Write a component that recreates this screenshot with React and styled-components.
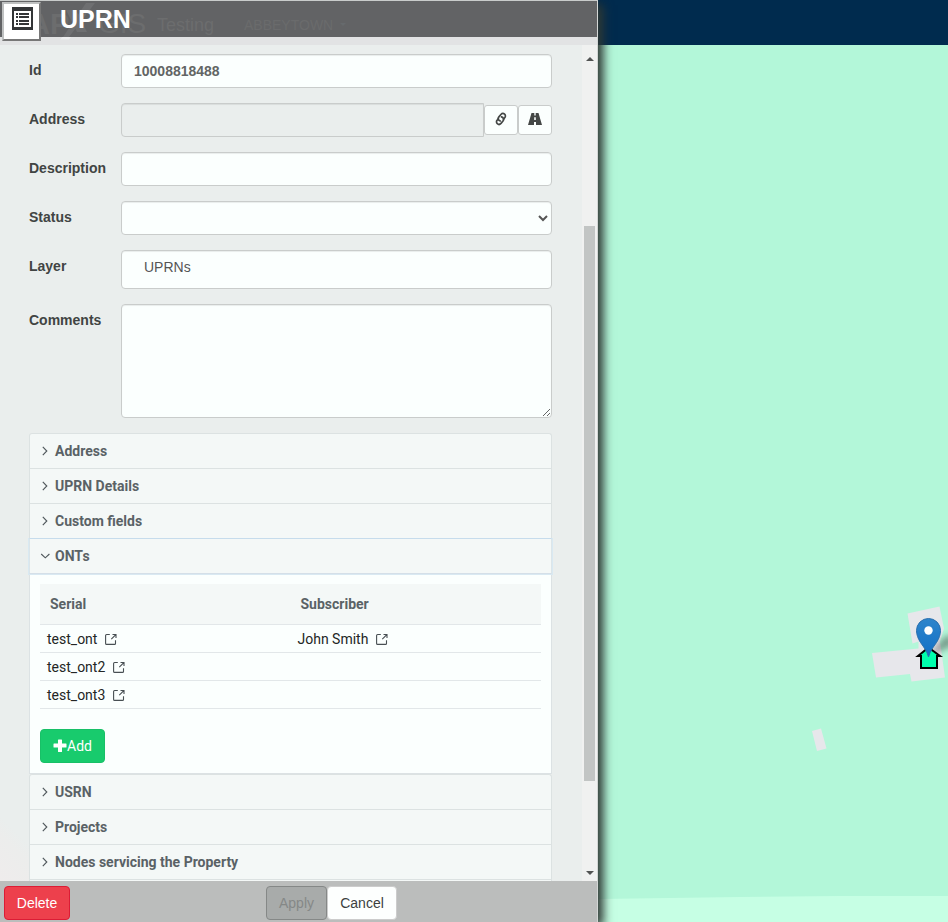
import React from "react";
import styled, { createGlobalStyle, css } from "styled-components";

const Global = createGlobalStyle`
  *, *::before, *::after { box-sizing: border-box; }
  body { margin: 0; overflow: hidden; font-family: "Liberation Sans", Arial, sans-serif; font-size: 14px; line-height: 20px; color: #333; }
  input, select, textarea, button { font: inherit; margin: 0; }
`;

const Page = styled.div`
  display: grid;
  grid-template-columns: 598px 1fr;
  height: 922px;
`;

const Panel = styled.section`
  position: relative;
  z-index: 1;
  display: flex;
  flex-direction: column;
  min-height: 0;
  background: #eaeeed;
  border-top: 1px solid #c9cccb;
  border-right: 1px solid #d3d6d5;
  box-shadow: 5px 5px 10px 0 #303a36, 1px 0 9px rgba(30, 35, 32, 0.4);
`;

const TitleBar = styled.header`
  position: relative;
  display: flex;
  align-items: flex-start;
  flex: none;
  height: 36px;
  padding-left: 2px;
  gap: 19px;
  background: #626365;
`;

const MenuButton = styled.button`
  z-index: 1;
  display: flex;
  align-items: flex-start;
  justify-content: center;
  flex: 0 0 39px;
  height: 39px;
  margin-top: 1px;
  padding: 3px 0 0 2px;
  background: #fff;
  border: 2px solid;
  border-color: #bfc1c1 #777 #777 #bfc1c1;
`;

const Title = styled.h1`
  z-index: 1;
  margin: 3px 0 0;
  font-size: 25px;
  line-height: 30px;
  font-weight: 700;
  color: #fff;
`;

const Ghost = styled.span`
  position: absolute;
  left: ${(p) => p.$x}px;
  top: ${(p) => p.$y}px;
  font-size: ${(p) => p.$size}px;
  line-height: ${(p) => p.$size}px;
  font-weight: ${(p) => p.$weight || 400};
  color: ${(p) => p.$tone || "#6c6d6e"};
`;

const GhostSlash = styled.svg`
  position: absolute;
  left: 58px;
  top: 1px;
`;

const GhostCaret = styled.svg`
  position: absolute;
  left: 340px;
  top: 22px;
`;

const Strip = styled.div`
  flex: 0 0 8px;
  background: #e2e3e4;
`;

const Scroller = styled.div`
  display: flex;
  flex: 1;
  min-height: 0;
`;

const Content = styled.div`
  flex: 1;
  min-width: 0;
  overflow: hidden;
  padding: 9px 30px 0 29px;
  background: linear-gradient(45deg, #efecec 0, #ecedec 34px, #eaeeed 46px);
`;

const Field = styled.div`
  display: grid;
  grid-template-columns: 92px 431px;
  margin-bottom: 15px;
  height: ${(p) => p.$h || 34}px;
`;

const Label = styled.label`
  padding-top: 6px;
  font-weight: 700;
  color: #414443;
`;

const control = css`
  width: 100%;
  height: 100%;
  color: #555;
  background: #fbfffe;
  border: 1px solid #c9cccb;
  border-radius: 4px;
  box-shadow: inset 0 1px 1px rgba(0, 0, 0, 0.075);
  outline: none;
`;

const Input = styled.input`
  ${control}
  padding: 6px 12px;
  font-weight: 700;
  color: #626564;
`;

const Select = styled.select`
  ${control}
  padding: 6px 12px;
`;

const TextArea = styled.textarea`
  ${control}
  display: block;
  padding: 6px 12px;
`;

const StaticValue = styled.div`
  ${control}
  padding: 6px 22px;
`;

const InputGroup = styled.div`
  display: grid;
  grid-template-columns: 363px 34px 34px;
  align-items: center;
`;

const LockedInput = styled(Input)`
  background: #eaeeed;
  border-radius: 4px 0 0 4px;
`;

const IconButton = styled.button`
  display: flex;
  align-items: center;
  justify-content: center;
  height: 30px;
  padding: 0 0 2px;
  color: #444746;
  background: #fbfffe;
  border: 1px solid #c9cccb;
  border-radius: 3px;
`;

const Accordion = styled.div`
  font-family: Roboto, sans-serif;
`;

const SectionHead = styled.div`
  display: flex;
  align-items: center;
  gap: 4px;
  height: ${(p) => (p.$open ? 36 : 35)}px;
  padding: 0 10px;
  font-weight: 700;
  color: #5a6266;
  background: #f4f8f7;
  border: 1px solid #dce2e2;
  border-bottom-width: ${(p) => (p.$open ? 1 : 0)}px;
  border-radius: ${(p) => (p.$round ? "3px 3px 0 0" : "0")};
  ${(p) =>
    p.$open &&
    css`
      border-color: #c6dcec #dce5e9 #d4dfe8;
      box-shadow: 0 0 0 1px #d9e9f2;
      clip-path: inset(0 -1px -1px -1px);
    `}
`;

const SectionBody = styled.div`
  height: 200px;
  padding: 10px 10px 0;
  background: #fbfffe;
  border: 1px solid #dce2e4;
  border-top: 0;
`;

const Table = styled.div`
  display: grid;
  grid-template-columns: 1fr 1fr;
  grid-template-rows: 41px repeat(3, 28px);
`;

const Th = styled.div`
  padding: 10px;
  font-weight: 700;
  color: #5a6266;
  background: #f4f8f7;
  border-bottom: 1px solid #e2e7e9;
`;

const Td = styled.div`
  display: flex;
  align-items: center;
  gap: 8px;
  padding: 0 7px;
  color: #232625;
  border-bottom: 1px solid #e2e7e9;
`;

const AddButton = styled.button`
  display: flex;
  align-items: center;
  width: 65px;
  height: 34px;
  margin-top: 20px;
  padding: 0 0 0 12px;
  color: #fff;
  background: #18cb6d;
  border: 1px solid #18c067;
  border-radius: 4px;
`;

const ScrollTrack = styled.div`
  display: flex;
  flex-direction: column;
  align-items: center;
  flex: 0 0 15px;
  padding: 12px 0 6px;
  background: #f0f1f0;
`;

const ScrollThumb = styled.div`
  width: 11px;
  height: 555px;
  margin: 165px 0 auto;
  background: #c2c5c4;
`;

const Arrow = styled.i`
  width: 0;
  height: 0;
  border: 4px solid transparent;
  ${(p) => (p.$up ? "border-top: 0; border-bottom-color: #515352;" : "border-bottom: 0; border-top-color: #515352;")}
`;

const Footer = styled.footer`
  display: grid;
  grid-template-columns: 262px 61px 70px;
  align-items: start;
  flex: 0 0 41px;
  padding: 5px 4px 0;
  background: #bbbdbc;
`;

const FooterButton = styled.button`
  height: 34px;
  padding: 0;
  border: 1px solid;
  border-radius: 4px;
  ${(p) =>
    ({
      danger: "width: 66px; color: #fff; background: #ed404c; border-color: #dc1c35;",
      muted: "color: #858887; background: #a8abaa; border-color: #858887;",
      plain: "color: #3c3f3e; background: #fdfffe; border-color: #ccc;",
    })[p.$kind]}
`;

const MapPane = styled.main`
  display: grid;
  grid-template-rows: 45px 1fr;
  background: #b3f7d9;
`;

const NavBar = styled.div`
  background: #002b4e;
`;

const MapDrawing = styled.svg`
  display: block;
`;

const Glyph = styled.svg`
  display: block;
  flex: none;
`;

function ListIcon() {
  return (
    <Glyph width="21" height="23" viewBox="0 0 21 23" shapeRendering="crispEdges">
      <path fill="#333537" d="M0 0h21v23H0z" />
      <path fill="#fff" d="M2 4h17v16H2z" />
      <path fill="#333537" d="M4 6h2v2H4zm3 0h10v2H7zM4 9h2v2H4zm3 0h10v2H7zM4 13h2v2H4zm3 0h10v2H7zM4 16h2v2H4zm3 0h10v2H7z" />
    </Glyph>
  );
}

function LinkIcon() {
  return (
    <Glyph width="14" height="14" viewBox="0 0 14 14" fill="none" stroke="currentColor" strokeWidth="1.7" strokeLinecap="round">
      <path d="M6.300 9C4.200 8.400 3.600 6.400 4.900 4.900l2-2.400c1-1.100 2.700-1.200 3.700-.3s1.100 2.500.1 3.600L9.500 7.300" />
      <path d="M7.500 4.900c2.100.6 2.700 2.600 1.500 4.100l-2 2.400c-1 1.100-2.700 1.200-3.700.3s-1.100-2.500-.1-3.600L4.300 6.700" />
    </Glyph>
  );
}

function RoadIcon() {
  return (
    <Glyph width="14" height="12" viewBox="0 0 14 12">
      <path fill="currentColor" d="M3.500 0h2.800v2.500h1.400V0h2.800L14 12H8V9H6v3H0zM6.200 4.300V7h1.600V4.300z" />
    </Glyph>
  );
}

function Chevron({ open }) {
  return (
    <Glyph width="11" height="12" viewBox="0 0 11 12" fill="none" stroke="#50585c" strokeWidth="1.15">
      <path d={open ? "M1.2 4l4.1 3.8L9.400 4" : "M2.800 1.800 6.800 6l-4 4.200"} />
    </Glyph>
  );
}

function ExternalIcon() {
  return (
    <Glyph width="12" height="12" viewBox="0 0 12 12" fill="none" stroke="#484f53" strokeWidth="1.1">
      <path d="M4.800 1.500H1.600q-1 0-1 1v7.900q0 1 1 1h7.900q1 0 1-1V7.200M7.500 1.500h3.500v3.500M10.800 1.700 6.300 6.200" />
    </Glyph>
  );
}

function PlusIcon() {
  return (
    <Glyph width="14" height="14" viewBox="0 0 14 14">
      <path fill="#fff" d="M5.500.5h3q.5 0 .5.5v3.500h4q.5 0 .5.5v3q0 .5-.5.5H9v4q0 .5-.5.5h-3q-.5 0-.5-.5v-4H1q-.5 0-.5-.5V5q0-.5.5-.5h4V1q0-.5.5-.5z" />
    </Glyph>
  );
}

function Section({ title, open, round }) {
  return (
    <SectionHead $open={open} $round={round}>
      <Chevron open={open} />
      {title}
    </SectionHead>
  );
}

function MapView() {
  return (
    <MapDrawing width="350" height="877" viewBox="598 45 350 877">
      <defs>
        <linearGradient id="pin" x1="0" y1="0" x2="0" y2="1">
          <stop offset="0" stopColor="#2e85cb" />
          <stop offset="1" stopColor="#126fc6" />
        </linearGradient>
        <filter id="soft" x="-50%" y="-50%" width="200%" height="200%">
          <feGaussianBlur stdDeviation="3" />
        </filter>
      </defs>
      <path fill="#b3f7d9" d="M598 45h350v877H598z" />
      <path fill="#c6ffe4" d="M598 899l142-2 100-1h108v26H598z" />
      <path fill="#e7e7eb" d="M907.500 613.500l32-7 4.500 22-4 13 5 36-33.500 4-1.500-7.500-34 3.500-4-24.500 46.500-4.500v-7l-6 2zM812 731l9-2.500 5.500 20-9.500 2.500z" />
      <path d="M929 656l15-19 10-2-2 11z" fill="#333" opacity=".45" filter="url(#soft)" />
      <path fill="#00ffad" stroke="#000" strokeWidth="2" d="M928.500 647.500 918 656h3v12h16v-12h3z" />
      <path fill="url(#pin)" stroke="#2a6fae" strokeWidth="1" d="M928.500 657c-1.500-6-4.500-9.500-8-14.500-2.500-3.800-4-8-4-12a12 12 0 0 1 24 0c0 4-1.500 8.200-4 12-3.500 5-6.500 8.500-8 14.500z" />
      <circle cx="928.500" cy="630.500" r="4.200" fill="#fff" />
    </MapDrawing>
  );
}

const onts = [
  { serial: "test_ont", subscriber: "John Smith" },
  { serial: "test_ont2" },
  { serial: "test_ont3" },
];

export default function App() {
  return (
    <Page>
      <Global />
      <Panel>
        <TitleBar>
          <Ghost $x={29} $y={9} $size={29} $weight={700}>AP</Ghost>
          <GhostSlash width="40" height="38" viewBox="0 0 40 38">
            <path fill="#6e6f71" d="M28 1h9L11 35H5zM8 8h10l11 22H19z" />
            <path fill="#eeeff0" d="M4.500 35H13l-2 2.500H2z" />
          </GhostSlash>
          <Ghost $x={98} $y={9} $size={28}>GIS</Ghost>
          <Ghost $x={157} $y={15} $size={18}>Testing</Ghost>
          <Ghost $x={244} $y={17} $size={14} $tone="#6a6b6c">ABBEYTOWN</Ghost>
          <GhostCaret width="6" height="4" viewBox="0 0 6 4">
            <path fill="#666a6d" d="M0 0h6L3 3z" />
          </GhostCaret>
          <MenuButton><ListIcon /></MenuButton>
          <Title>UPRN</Title>
        </TitleBar>
        <Strip />
        <Scroller>
          <Content>
            <Field><Label>Id</Label><Input defaultValue="10008818488" /></Field>
            <Field>
              <Label>Address</Label>
              <InputGroup>
                <LockedInput readOnly />
                <IconButton><LinkIcon /></IconButton>
                <IconButton><RoadIcon /></IconButton>
              </InputGroup>
            </Field>
            <Field><Label>Description</Label><Input /></Field>
            <Field><Label>Status</Label><Select /></Field>
            <Field $h={39}><Label>Layer</Label><StaticValue>UPRNs</StaticValue></Field>
            <Field $h={114}><Label>Comments</Label><TextArea /></Field>
            <Accordion>
              <Section title="Address" round />
              <Section title="UPRN Details" />
              <Section title="Custom fields" />
              <Section title="ONTs" open />
              <SectionBody>
                <Table>
                  <Th>Serial</Th>
                  <Th>Subscriber</Th>
                  {onts.map((o) => (
                    <React.Fragment key={o.serial}>
                      <Td>{o.serial}<ExternalIcon /></Td>
                      <Td>{o.subscriber && <>{o.subscriber}<ExternalIcon /></>}</Td>
                    </React.Fragment>
                  ))}
                </Table>
                <AddButton><PlusIcon />Add</AddButton>
              </SectionBody>
              <Section title="USRN" round />
              <Section title="Projects" />
              <Section title="Nodes servicing the Property" />
              <Section title="" />
            </Accordion>
          </Content>
          <ScrollTrack>
            <Arrow $up />
            <ScrollThumb />
            <Arrow />
          </ScrollTrack>
        </Scroller>
        <Footer>
          <FooterButton $kind="danger">Delete</FooterButton>
          <FooterButton $kind="muted">Apply</FooterButton>
          <FooterButton $kind="plain">Cancel</FooterButton>
        </Footer>
      </Panel>
      <MapPane>
        <NavBar />
        <MapView />
      </MapPane>
    </Page>
  );
}
